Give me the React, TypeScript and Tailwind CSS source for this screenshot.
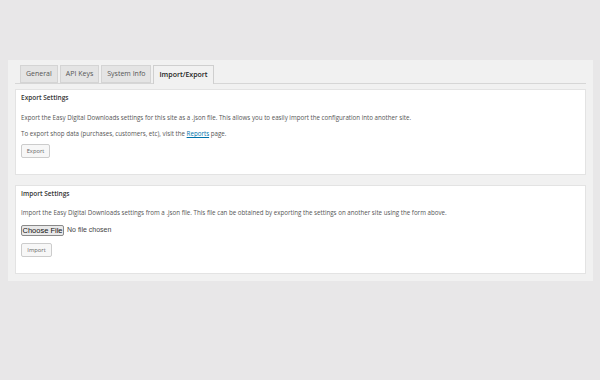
export default function App() {
  const tabs = ["General", "API Keys", "System Info", "Import/Export"]
  const active = "Import/Export"

  return (
    <div
      className="h-[380px] w-[600px] bg-[#e8e7e8] pt-[60px] pl-[8px]"
      style={{ fontFamily: '"Open Sans", "Liberation Sans", sans-serif' }}
    >
      <div className="w-[585px] bg-[#f1f1f1] px-[7px] pt-[5px] pb-[7px]">
        <div className="flex gap-[2px] border-b border-[#d6d6d6] pl-[5px]">
          {tabs.map((t) => (
            <div
              key={t}
              className={
                t === active
                  ? "-mb-px flex h-[19px] items-center border border-b-0 border-[#cfcfcf] bg-[#f1f1f1] px-[5px] text-[7px] font-semibold text-[#222]"
                  : "flex h-[18px] items-center border border-[#d4d4d4] bg-[#e4e4e4] px-[5px] text-[7px] text-[#555]"
              }
            >
              {t}
            </div>
          ))}
        </div>

        <div className="mt-[5px] flex flex-col items-start border border-[#e3e3e3] bg-white px-[5px] pt-[3px] pb-[16px]">
          <div className="flex h-[10px] items-center text-[6.5px] font-semibold text-[#333]">
            Export Settings
          </div>
          <p className="mt-[10px] flex h-[10px] items-center whitespace-nowrap text-[6.2px] text-[#555]">
            Export the Easy Digital Downloads settings for this site as a .json file. This allows you to easily import the configuration into another site.
          </p>
          <p className="mt-[6px] flex h-[10px] items-center whitespace-nowrap text-[6.2px] text-[#555]">
            To export shop data (purchases, customers, etc), visit the&nbsp;
            <span className="text-[#0073aa] underline">Reports</span>&nbsp;page.
          </p>
          <div className="mt-[5px] flex h-[14px] w-[29px] items-center justify-center rounded-[2px] border border-[#cccccc] bg-[#f7f7f7] text-[5.8px] text-[#666]">
            Export
          </div>
        </div>

        <div className="mt-[10px] flex flex-col items-start border border-[#e3e3e3] bg-white px-[5px] pt-[3px] pb-[16px]">
          <div className="flex h-[10px] items-center text-[6.5px] font-semibold text-[#333]">
            Import Settings
          </div>
          <p className="mt-[9px] flex h-[10px] items-center whitespace-nowrap text-[6.2px] text-[#555]">
            Import the Easy Digital Downloads settings from a .json file. This file can be obtained by exporting the settings on another site using the form above.
          </p>
          <div
            className="mt-[7px] flex items-center gap-[3px]"
            style={{ fontFamily: '"Liberation Sans", Arial, sans-serif' }}
          >
            <div className="flex h-[11px] w-[43px] items-center justify-center whitespace-nowrap rounded-[2px] border border-[#8a8a8a] bg-[#e9e9e9] text-[7.5px] text-[#111]">
              Choose File
            </div>
            <span className="whitespace-nowrap text-[7px] text-[#444]">No file chosen</span>
          </div>
          <div className="mt-[7px] flex h-[14px] w-[31px] items-center justify-center rounded-[2px] border border-[#cccccc] bg-[#f7f7f7] text-[5.8px] text-[#666]">
            Import
          </div>
        </div>
      </div>
    </div>
  )
}
